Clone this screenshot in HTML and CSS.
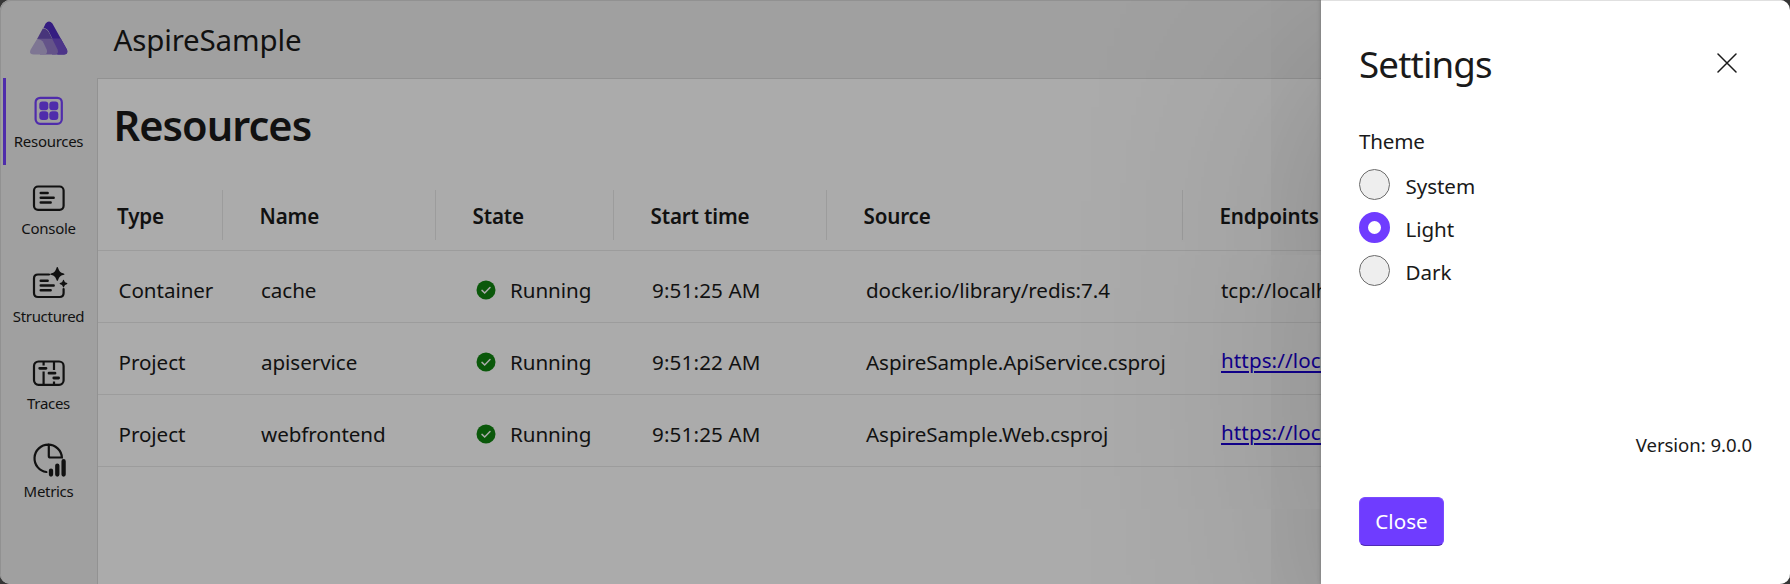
FILE: index.html
```html
<!DOCTYPE html>
<html lang="en">
<head>
<meta charset="utf-8">
<title>AspireSample</title>
<link rel="stylesheet" href="styles.css">
</head>
<body>
<div class="app">
  <header class="topbar">
    <svg class="logo" width="38" height="34" viewBox="0 0 38 34">
      <path d="M15.6 2.4Q19 -1.4 22.4 2.4L36.9 28.6Q38.4 33.2 34 33.5H27Q29.500 33 28.500 30L19 11Q17.500 7.500 13.500 7Z" fill="#4f2cc0"/>
      <path d="M22 17.500H30.800L36.900 28.600Q38.400 33.200 34 33.500H22Z" fill="#7350cc"/>
      <path d="M12.800 7.500Q16.800 7.500 19 11.500L22.300 18H7.100Z" fill="#6c50b8"/>
      <path d="M7.300 17.800H22.200L27.600 28.600Q29 33.200 25 33.500H10Z" fill="#957ccd"/>
      <path d="M6.700 18.400Q11.300 17.600 13.600 22L16.800 28.800Q17.800 33.200 14 33.500H3.500Q-1.500 33 .7 28.600Z" fill="#bcb0dc"/>
    </svg>
    <div class="app-name">AspireSample</div>
  </header>
  <nav class="nav">
    <a class="nav-item active">
      <svg class="nav-icon" viewBox="0 0 36 36"><rect class="line" x="4.600" y="4.800" width="26.200" height="26" rx="4.500"/><g fill="currentColor"><rect x="8.300" y="8.500" width="9" height="8.700" rx="3"/><rect x="18.300" y="8.500" width="9" height="8.700" rx="3"/><rect x="8.300" y="18.300" width="9" height="8.700" rx="3"/><rect x="18.300" y="18.300" width="9" height="8.700" rx="3"/></g></svg>
      <span>Resources</span>
    </a>
    <a class="nav-item">
      <svg class="nav-icon" viewBox="0 0 36 36"><rect class="line" x="3" y="6.500" width="29.600" height="23.300" rx="4"/><path class="line bold" d="M9.700 13H16.700M9.700 17.800H22.700M9.700 22.500H19.700"/></svg>
      <span>Console</span>
    </a>
    <a class="nav-item">
      <svg class="nav-icon" viewBox="0 0 36 36"><path class="line" d="M18 6.500H7Q3 6.500 3 10.500V25Q3 29 7 29H28.600Q32.600 29 32.600 25V21"/><path class="line bold" d="M9.700 12.700H16.700M9.700 17.500H22.700M9.700 22.300H19.700"/><path fill="currentColor" d="M26.300 -1Q26.900 -1 27.300 .4Q28.500 4.500 32 5.300Q33.500 5.700 33.500 6.200T32 7.100Q28.500 8 27.300 11.600Q26.900 13 26.300 13T25.300 11.600Q24.100 8 20.600 7.100Q19.100 6.700 19.100 6.200T20.600 5.300Q24.100 4.500 25.300 .4Q25.700 -1 26.300 -1ZM32.500 11.800Q33 11.800 33.300 13Q33.800 14.500 35.200 14.800Q36.400 15.100 36.400 15.600T35.200 16.400Q33.800 16.700 33.300 18.200Q33 19.400 32.500 19.400T31.700 18.200Q31.200 16.700 29.800 16.400Q28.600 16.100 28.600 15.600T29.800 14.800Q31.200 14.500 31.700 13Q32 11.800 32.500 11.800Z"/></svg>
      <span>Structured</span>
    </a>
    <a class="nav-item">
      <svg class="nav-icon" viewBox="0 0 36 36"><rect class="line" x="3" y="6.500" width="29.600" height="23.300" rx="4.500"/><path class="line butt" d="M12.600 6.500V10.500M12.600 16.500V29.800M23 6.500V15M23 26.500V29.800"/><path class="line bar" d="M8.700 13.300H15M18 18.200H24M22.800 23H27.600"/></svg>
      <span>Traces</span>
    </a>
    <a class="nav-item">
      <svg class="nav-icon" viewBox="0 0 36 36"><path class="line" d="M15.400 29A13.700 13.700 0 1 1 30.900 14.500H19.300Q17.800 14.500 17.800 13V1.600"/><path class="line thick" d="M20 27.600V31.500M26.300 22.600V31.500M32.600 18.200V31.500"/></svg>
      <span>Metrics</span>
    </a>
  </nav>
  <main class="main">
    <h1>Resources</h1>
    <div class="grid-row grid-head">
      <div>Type</div><div>Name</div><div>State</div><div>Start time</div><div>Source</div><div>Endpoints</div>
    </div>
    <div class="grid-row">
      <div>Container</div><div>cache</div>
      <div class="state"><svg width="20" height="20" viewBox="0 0 20 20"><circle cx="10" cy="10" r="9.500" fill="#108410"/><path d="M6 10.400L8.700 13L14 7.500" fill="none" stroke="#fff" stroke-width="1.500" stroke-linecap="round"/></svg>Running</div>
      <div class="time">9:51:25 AM</div><div class="source">docker.io/library/redis:7.4</div><div>tcp://localh</div>
    </div>
    <div class="grid-row">
      <div>Project</div><div>apiservice</div>
      <div class="state"><svg width="20" height="20" viewBox="0 0 20 20"><circle cx="10" cy="10" r="9.500" fill="#108410"/><path d="M6 10.400L8.700 13L14 7.500" fill="none" stroke="#fff" stroke-width="1.500" stroke-linecap="round"/></svg>Running</div>
      <div class="time">9:51:22 AM</div><div class="source">AspireSample.ApiService.csproj</div><div class="link"><a>https://loca</a></div>
    </div>
    <div class="grid-row">
      <div>Project</div><div>webfrontend</div>
      <div class="state"><svg width="20" height="20" viewBox="0 0 20 20"><circle cx="10" cy="10" r="9.500" fill="#108410"/><path d="M6 10.400L8.700 13L14 7.500" fill="none" stroke="#fff" stroke-width="1.500" stroke-linecap="round"/></svg>Running</div>
      <div class="time">9:51:25 AM</div><div class="source">AspireSample.Web.csproj</div><div class="link"><a>https://loca</a></div>
    </div>
  </main>
  <div class="overlay">
    <section class="panel">
      <div class="panel-head">
        <h2>Settings</h2>
        <svg width="20" height="20" viewBox="0 0 20 20"><path d="M1 1L19 19M19 1L1 19" stroke="#1a1a1a" stroke-width="1.500" stroke-linecap="round"/></svg>
      </div>
      <div class="field-label">Theme</div>
      <label class="radio"><i class="dot"></i><span>System</span></label>
      <label class="radio"><i class="dot checked"></i><span>Light</span></label>
      <label class="radio"><i class="dot"></i><span>Dark</span></label>
      <div class="version">Version: 9.0.0</div>
      <button class="close">Close</button>
    </section>
  </div>
</div>
</body>
</html>
```
FILE: styles.css
```css
* { box-sizing: border-box; }
body {
  margin: 0;
  background: #363636;
  color: #1a1a1a;
  font: 20.6px/28px "Noto Sans", "Open Sans", sans-serif;
  letter-spacing: -0.06px;
}
.app {
  position: relative;
  display: grid;
  grid-template: 78px 1fr / 97px 1fr;
  width: 1790px;
  height: 584px;
  overflow: hidden;
  border-radius: 10px;
  background: #efefef;
}
.topbar { grid-column: 1 / 3; display: flex; align-items: center; }
.logo { margin: 0 45.5px 3px 30px; }
.app-name { padding-top: 2px; font-size: 29.5px; line-height: 40px; letter-spacing: -0.15px; }

.nav { display: flex; flex-direction: column; }
.nav-item {
  display: flex;
  flex-direction: column;
  align-items: center;
  height: 87.4px;
  padding-top: 15px;
  font-size: 15px;
  line-height: 20px;
  letter-spacing: -0.3px;
}
.nav-item.active {
  margin-left: 3px;
  padding-right: 3px;
  box-shadow: inset 3px 0 #7742ff;
}
.nav-icon {
  width: 36px;
  height: 36px;
  margin-bottom: 2px;
  overflow: visible;
}
.active .nav-icon { color: #7742ff; }
.line { fill: none; stroke: currentColor; stroke-width: 2.2; stroke-linecap: round; }
.line.bold { stroke-width: 2.4; }
.line.bar { stroke-width: 2.8; }
.line.butt { stroke-linecap: butt; }
.line.thick { stroke-width: 4.3; }

.main { overflow: hidden; border: solid #dadada; border-width: 1px 0 0 1px; background: #fff; }
h1 {
  height: 100px;
  margin: 0;
  padding: 23px 0 0 15.5px;
  font-size: 41.5px;
  line-height: 46px;
  font-weight: 600;
  letter-spacing: -0.95px;
}
.grid-row {
  display: grid;
  grid-template-columns: 125px 213px 178px 213px 356px 1fr;
  height: 72px;
  border-bottom: 1px solid #e9e9e9;
  white-space: nowrap;
}
.grid-row > div { display: flex; align-items: center; padding: 6px 0 0 38px; }
.grid-row > div:first-child { padding-left: 20.5px; }
.grid-row > .state { gap: 14px; padding-left: 40px; }
.grid-row > .time { letter-spacing: 0.15px; }
.grid-row > .source { padding-left: 39px; letter-spacing: -0.06px; }
.grid-row > .link { padding-top: 2px; letter-spacing: 0.1px; }
.link a { color: #1a00d4; text-decoration: underline; text-decoration-thickness: 2px; text-underline-offset: 3px; }
.grid-head { padding: 11px 0 10px; font-weight: 600; letter-spacing: -0.15px; }
.grid-head > div { padding: 2px 0 0 36.5px; border-right: 1px solid #e9e9e9; }
.grid-head > div:first-child { padding-left: 19px; }
.grid-head > div:last-child { border: 0; }

.overlay {
  position: absolute;
  inset: 0;
  display: flex;
  justify-content: flex-end;
  overflow: hidden;
  border-radius: 10px;
  background: rgba(0, 0, 0, 0.33);
  box-shadow: inset 1px 1px #919191;
}
.panel {
  display: flex;
  flex-direction: column;
  width: 469px;
  padding: 38px;
  border-top: 1px solid #e0e0e0;
  background: #fff;
  box-shadow: 0 70px 230px rgba(0, 0, 0, 0.26), 0 0 4px rgba(0, 0, 0, 0.25);
}
.panel-head { display: flex; align-items: center; justify-content: space-between; height: 50px; padding-right: 15px; }
.panel-head svg { margin-bottom: 3px; }
h2 { margin: 0; font-size: 36.7px; line-height: 50px; font-weight: 400; letter-spacing: -0.85px; }
.field-label { margin: 38px 0 13.5px; letter-spacing: -0.2px; }
.radio { display: flex; align-items: center; gap: 15.5px; height: 32px; margin-bottom: 11.7px; }
.radio span { padding-top: 3px; }
.dot { width: 31px; height: 31px; border: 1px solid #6b6b6b; border-radius: 50%; background: #eee; }
.dot.checked { border: 9px solid #6f3cff; background: #fff; }
.version { margin: 132.5px 0 38px; text-align: right; font-size: 18.6px; }
.close {
  align-self: flex-start;
  width: 85px;
  height: 50px;
  padding: 0;
  border: 1px solid #7a4bff;
  border-bottom-color: #4f2bb5;
  border-radius: 6px;
  background: #6f3cff;
  color: #fff;
  font: inherit;
}
```
